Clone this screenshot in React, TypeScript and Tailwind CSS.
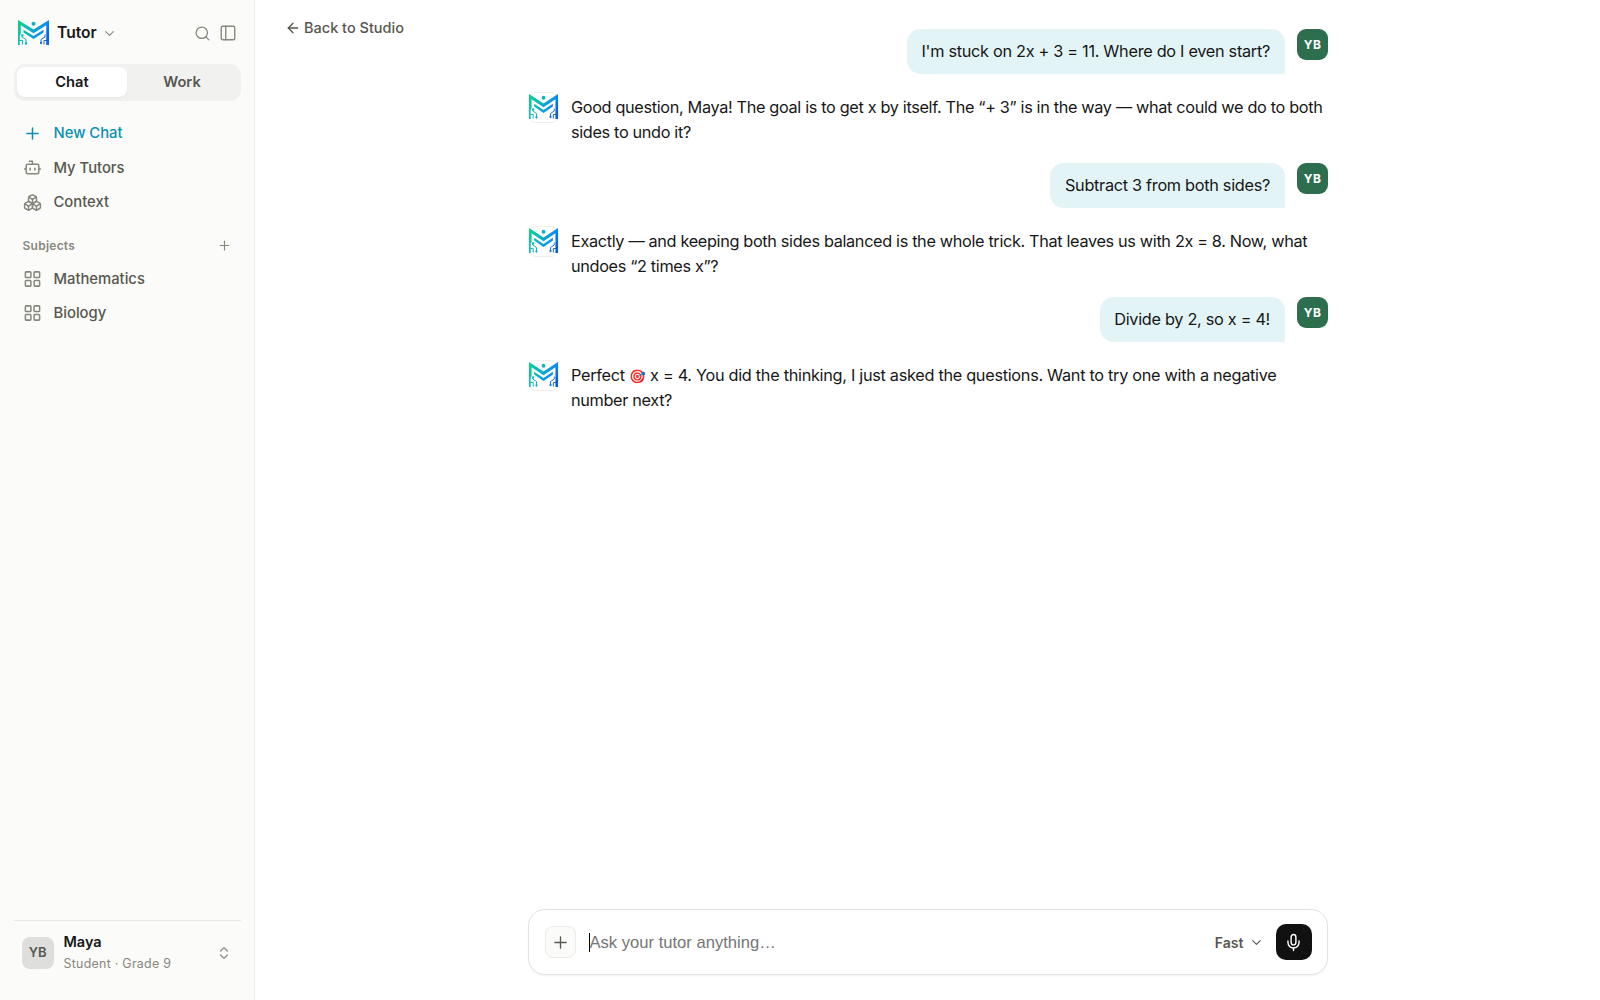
import React, { useId } from "react";
import {
  ArrowLeft,
  Bot,
  Boxes,
  ChevronDown,
  ChevronsUpDown,
  LayoutGrid,
  Mic,
  PanelLeft,
  Plus,
  Search,
} from "lucide-react";

function Logo({ className }: { className: string }) {
  const id = useId();
  const paint = `url(#${id})`;
  return (
    <svg viewBox="0 0 62 50" preserveAspectRatio="none" className={className} fill="none">
      <defs>
        <linearGradient id={id} x1="0" y1="0" x2="60" y2="36" gradientUnits="userSpaceOnUse">
          <stop offset="0" stopColor="#06d48c" />
          <stop offset="0.4" stopColor="#08b9bd" />
          <stop offset="0.75" stopColor="#0a8df0" />
          <stop offset="1" stopColor="#125bdc" />
        </linearGradient>
      </defs>
      <path d="M0 0 31 19 62 0V50H56.5V10.500L31 26.500 5.500 10.500V28L3.500 31V50H0Z" fill={paint} />
      <path d="M11 19.500 31 32 51 19.500V25L31 38 11 25Z" fill={paint} />
      <circle cx="31" cy="7.500" r="4" fill={paint} />
      <path d="M8 29V34L16 39V48M3 41H9V49M54 29V34L46 39V47M58 41H52V49" stroke={paint} strokeWidth="2" />
      <circle cx="9" cy="31" r="2.300" fill={paint} />
      <circle cx="16" cy="47" r="2.300" fill={paint} />
      <circle cx="46" cy="46" r="2.300" fill={paint} />
    </svg>
  );
}

function NavItem({ icon, label, active }: { icon: React.ReactNode; label: string; active?: boolean }) {
  return (
    <div
      className={`flex h-[34.5px] items-center gap-[11.5px] pl-[9.5px] text-[14.8px] font-medium ${
        active ? "text-[#0891b2]" : "text-[#57574f]"
      }`}
    >
      <span className={`flex w-[19px] justify-center ${active ? "" : "text-[#87877d]"}`}>{icon}</span>
      {label}
    </div>
  );
}

function UserMessage({ children }: { children: React.ReactNode }) {
  return (
    <div className="flex items-start justify-end gap-3">
      <div className="flex h-[45px] items-center rounded-[14px] rounded-br-[2px] bg-[#e2f4f5] pr-[15px] pl-[14.7px] text-[16.3px] tracking-[-0.3px] whitespace-nowrap">
        {children}
      </div>
      <div className="flex size-[31px] items-center justify-center rounded-[9px] bg-[#2d6e4e] text-[12px] font-bold tracking-[0.3px] text-white">
        YB
      </div>
    </div>
  );
}

function TutorMessage({ children }: { children: React.ReactNode }) {
  return (
    <div className="flex h-[50px] items-start gap-[12px]">
      <div className="-mt-[2px] flex h-[31px] w-[31px] shrink-0 items-center justify-center rounded-[8px] border border-[#efefed] bg-white">
        <Logo className="-mt-px h-[25px] w-[29px] shrink-0" />
      </div>
      <p className="pt-[1.5px] text-[16.3px] leading-[25px] tracking-[-0.35px] whitespace-nowrap">{children}</p>
    </div>
  );
}

export default function App() {
  return (
    <div className="flex h-[1000px] w-[1600px] overflow-hidden bg-white font-['Inter',sans-serif] text-[#171717]">
      <aside className="flex w-[255px] shrink-0 flex-col border-r border-[#ebebe9] bg-[#fbfbf9] px-[13.5px]">
        <div className="mt-[16px] flex h-[34px] items-center pl-[4px]">
          <Logo className="-mt-px h-[25px] w-[31px]" />
          <span className="ml-[8.5px] text-[15.6px] font-semibold">Tutor</span>
          <ChevronDown className="ml-[5.5px] size-[15px] text-[#87877d]" strokeWidth={1.8} />
          <Search className="ml-auto size-[17px] text-[#87877d]" strokeWidth={1.8} />
          <PanelLeft className="mr-[3.5px] ml-[8px] size-[18px] text-[#87877d]" strokeWidth={1.8} />
        </div>
        <div className="mt-[13.5px] flex h-[37px] rounded-[11px] bg-[#f1f1ef] p-[3.5px] text-[14.7px] font-semibold">
          <div className="flex flex-1 items-center justify-center rounded-[8px] bg-white pt-px shadow-xs">Chat</div>
          <div className="flex flex-1 items-center justify-center pt-px text-[#57574f]">Work</div>
        </div>
        <nav className="mt-[15.5px]">
          <NavItem active icon={<Plus className="size-[19px]" strokeWidth={1.9} />} label="New Chat" />
          <NavItem icon={<Bot className="size-[19px]" strokeWidth={1.9} />} label="My Tutors" />
          <NavItem icon={<Boxes className="size-[19px]" strokeWidth={1.9} />} label="Context" />
        </nav>
        <div className="mt-[11px] flex h-[30px] items-center justify-between pr-[8.5px] pl-[9px] text-[12px] font-semibold tracking-[0.25px] text-[#87877d]">
          Subjects
          <Plus className="size-[15px]" strokeWidth={1.9} />
        </div>
        <nav className="mt-[1px]">
          <NavItem icon={<LayoutGrid className="size-[20px]" strokeWidth={1.9} />} label="Mathematics" />
          <NavItem icon={<LayoutGrid className="size-[20px]" strokeWidth={1.9} />} label="Biology" />
        </nav>
        <div className="mt-auto flex h-[80px] border-t border-[#e8e8e6] pt-[16px] pl-[8.5px]">
          <div className="flex size-[31.5px] items-center justify-center rounded-[8px] bg-[#dededd] text-[13px] font-semibold text-[#57574f]">
            YB
          </div>
          <div className="-mt-[6px] ml-[10px] flex flex-col">
            <span className="text-[14.5px] leading-[22px] font-semibold">Maya</span>
            <span className="text-[12.4px] leading-[22px] tracking-[0.28px] text-[#87877d]">Student · Grade 9</span>
          </div>
          <ChevronsUpDown className="mt-[8px] mr-[8.5px] ml-auto size-[16px] text-[#87877d]" strokeWidth={1.8} />
        </div>
      </aside>

      <main className="flex flex-1">
        <div className="mt-[18px] flex h-[20px] w-[273px] shrink-0 items-center gap-[3px] pl-[30px] text-[14.5px] font-medium text-[#57574f]">
          <ArrowLeft className="size-[16px]" strokeWidth={2} />
          Back to Studio
        </div>
        <div className="flex w-[800px] flex-col pt-[29px] pb-[25px]">
          <div className="flex flex-col gap-[19.5px]">
            <UserMessage>I'm stuck on 2x + 3 = 11. Where do I even start?</UserMessage>
            <TutorMessage>
              Good question, Maya! The goal is to get x by itself. The “+ 3” is in the way — what could we do to both
              <br />
              sides to undo it?
            </TutorMessage>
            <UserMessage>Subtract 3 from both sides?</UserMessage>
            <TutorMessage>
              Exactly — and keeping both sides balanced is the whole trick. That leaves us with 2x = 8. Now, what
              <br />
              undoes “2 times x”?
            </TutorMessage>
            <UserMessage>Divide by 2, so x = 4!</UserMessage>
            <TutorMessage>
              <span className="tracking-[-0.3px]">
                Perfect <span className="text-[13.5px] leading-none">🎯</span> x = 4. You did the thinking, I just
                asked the questions. Want to try one with a negative
              </span>
              <br />
              number next?
            </TutorMessage>
          </div>
          <div className="mt-auto flex h-[66px] items-center rounded-[17px] border border-[#e2e2e0] bg-white pr-[15.5px] pl-[15.5px] shadow-xs">
            <div className="flex size-[31.5px] items-center justify-center rounded-[8px] border border-[#ebebe9] bg-[#fbfbf9] text-[#57574f]">
              <Plus className="size-[19px]" strokeWidth={1.7} />
            </div>
            <div className="ml-[12.5px] h-[19px] w-px bg-black" />
            <span className="pt-[2px] font-['Liberation_Sans',sans-serif] text-[16.6px] text-[#757575]">
              Ask your tutor anything…
            </span>
            <span className="ml-auto text-[14px] font-semibold text-[#57574f]">Fast</span>
            <ChevronDown className="ml-[5px] size-[15px] text-[#57574f]" strokeWidth={1.8} />
            <div className="ml-[12px] flex size-[36px] items-center justify-center rounded-[10px] bg-[#111111] text-white">
              <Mic className="size-[19px]" strokeWidth={1.8} />
            </div>
          </div>
        </div>
      </main>
    </div>
  );
}
